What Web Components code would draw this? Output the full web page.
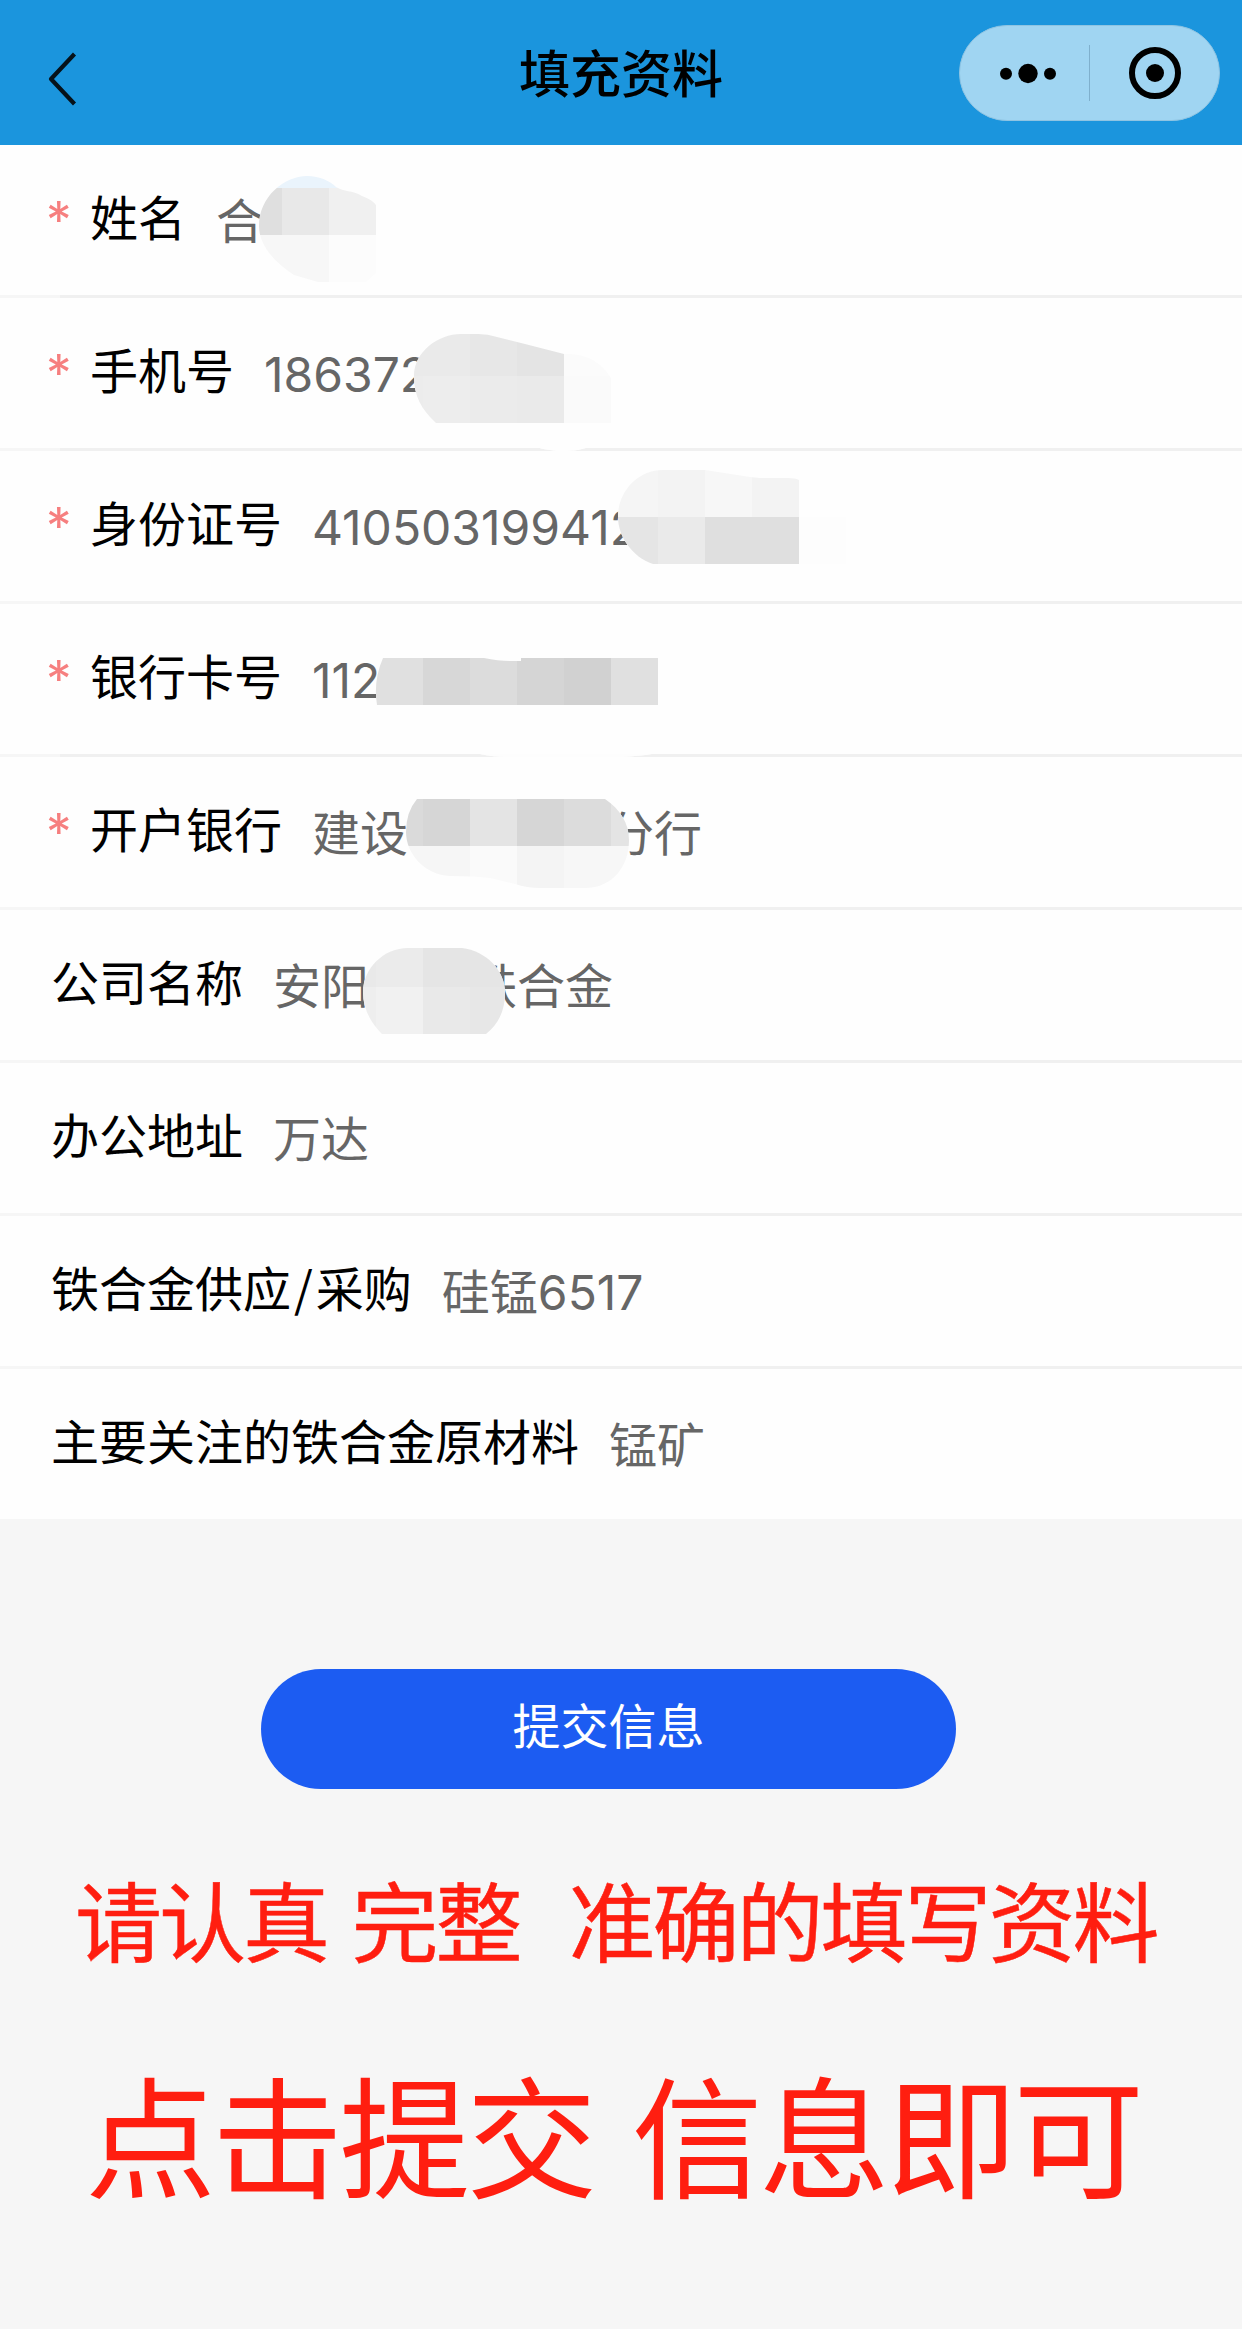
<!DOCTYPE html>
<html lang="zh-CN">
<head>
<meta charset="utf-8">
<title>填充资料</title>
<style>
  body {
    margin: 0;
    background: #f6f6f6;
    font-family: Inter, "Noto Sans CJK SC", sans-serif;
    font-size: 48px;
    color: #000;
  }
</style>
</head>
<body>
<profile-page>
  <nav-bar slot="header">填充资料</nav-bar>

  <form-row required label="姓名">合
    <mosaic-patch slot="patch" outline="M259 81 C259 52 284 31 307 31 C320 31 330 36 336 42 C344 47 352 45 362 51 C370 54 374 57 376 60 V128 L366 137 H318 L294 130 C274 117 259 100 259 81Z" cells="259,31,117,12,#eaf4fc 259,43,23,47,#dfdfdf 282,43,47,47,#e8e8e8 329,43,47,47,#f0f0f0 259,90,70,47,#f7f7f7 329,90,47,47,#fcfcfc"></mosaic-patch>
  </form-row>
  <form-row required label="手机号">186372
    <mosaic-patch slot="patch" outline="M414 78 C414 54 438 36 461 36 H478 Q488 36 497 39 L525 46 L564 56 H570 C588 57 602 65 611 80 V130 C609 142 590 153 564 153 C540 153 530 146 510 141 L436 125 C421 111 414 98 414 78Z" cells="414,36,56,42,#eaeaea 470,36,47,42,#e7e7e7 517,36,47,42,#e4e4e4 564,36,47,42,#fbfbfb 414,78,9,47,#ececec 423,78,47,47,#ededed 470,78,47,47,#ebebeb 517,78,47,47,#eaeaea 564,78,47,47,#fafafa 436,125,175,28,#fefefe"></mosaic-patch>
  </form-row>
  <form-row required label="身份证号">410503199412
    <mosaic-patch slot="patch" outline="M618 66 C618 40 638 19 663 19 H705 L750 26 L760 27 H788 Q796 27 799 29 V66 H846 V115 C835 126 800 129 780 126 L705 115 L653 113 C632 106 618 85 618 66Z" cells="618,19,40,47,#f5f5f5 658,19,47,47,#f3f3f3 705,19,47,47,#f7f7f7 752,19,47,47,#f3f3f3 618,66,40,47,#e5e5e5 658,66,47,47,#eaeaea 705,66,94,47,#dfdfdf 799,66,47,47,#fdfdfd"></mosaic-patch>
  </form-row>
  <form-row required label="银行卡号">112
    <mosaic-patch slot="patch" outline="M383 54 H484 Q498 57 510 57 H521 V54 H658 V101 H377 Q373 77 383 54Z M480 150 Q492 153 510 153 H620 Q640 152 652 150Z" cells="373,54,50,47,#e0e0e0 423,54,47,47,#d7d7d7 470,54,47,47,#dcdcdc 517,54,47,47,#d5d5d5 564,54,47,47,#d1d1d1 611,54,47,47,#e0e0e0 480,150,172,3,#fdfdfd"></mosaic-patch>
  </form-row>
  <form-row required label="开户银行">建设<text-gap style="width:198px"></text-gap>分行
    <mosaic-patch slot="patch" outline="M417 42 H605 C620 52 629 66 629 83 C629 110 612 131 585 131 H540 Q527 131 515 127 L490 121 Q475 119 450 119 C425 118 406 97 406 75 Q406 55 417 42Z" cells="406,42,17,47,#dadada 423,42,47,47,#d6d6d6 470,42,47,47,#e4e4e4 517,42,47,47,#d6d6d6 564,42,47,47,#dcdcdc 611,42,18,47,#e4e4e4 406,89,64,42,#f6f6f6 470,89,47,42,#fafafa 517,89,47,42,#f4f4f4 564,89,65,42,#f7f7f7"></mosaic-patch>
  </form-row>
  <form-row label="公司名称">安阳<text-gap style="width:100px"></text-gap>铁合金
    <mosaic-patch slot="patch" outline="M363 82 C363 58 384 38 408 38 H462 C486 41 505 60 505 83 Q505 109 486 124 H382 Q363 105 363 82Z" cells="363,38,13,39,#e9e9e9 376,38,47,39,#ebebeb 423,38,82,39,#e5e5e5 363,77,13,47,#eeeeee 376,77,47,47,#f1f1f1 423,77,47,47,#e9e9e9 470,77,35,47,#e7e7e7"></mosaic-patch>
  </form-row>
  <form-row label="办公地址">万达</form-row>
  <form-row label="铁合金供应/采购">硅锰6517</form-row>
  <form-row label="主要关注的铁合金原材料">锰矿</form-row>

  <submit-button slot="action">提交信息</submit-button>
  <red-note slot="notes" style="--size:87px; --tracking:-3px; --space:8px; --left:75px; --stroke:.5px">请认真 完整  准确的填写资料</red-note>
  <red-note slot="notes" style="--size:131px; --tracking:-3.9px; --space:13px; --left:85px; --stroke:0">点击提交 信息即可</red-note>
</profile-page>

<script>
class ProfilePage extends HTMLElement {
  constructor() {
    super();
    this.attachShadow({ mode: "open" }).innerHTML = `
      <style>
        :host { display: flex; flex-direction: column; height: 2329px; overflow: hidden; }
        .rows { display: flex; flex: none; flex-direction: column; background: #fefefe; height: 1374px; overflow: hidden; }
        .action { padding: 150px 0 0 261px; }
        .notes { display: flex; flex-direction: column; padding-top: 69px; gap: 60px; }
      </style>
      <slot name="header"></slot>
      <div class="rows"><slot></slot></div>
      <div class="action"><slot name="action"></slot></div>
      <div class="notes"><slot name="notes"></slot></div>
    `;
  }
}

class NavBar extends HTMLElement {
  constructor() {
    super();
    this.attachShadow({ mode: "open" }).innerHTML = `
      <style>
        :host {
          display: grid;
          flex: none;
          grid-template-columns: 1fr auto 1fr;
          align-items: center;
          box-sizing: border-box;
          height: 145px;
          padding: 0 22px;
          background: #1b95dd;
        }
        svg { display: block; }
        .back { margin: 13px 0 0 25px; }
        .title { font-size: 51px; font-weight: 500; line-height: 60px; padding-top: 4px; }
        .capsule { justify-self: end; }
      </style>
      <svg class="back" width="30" height="54" viewBox="0 0 30 54" fill="none" stroke="#06121a" stroke-width="4.2" stroke-linejoin="round">
        <path d="M27.5 2 L4 27 L27.5 52"/>
      </svg>
      <div class="title"><slot></slot></div>
      <svg class="capsule" width="261" height="96" viewBox="0 0 261 96">
        <rect x=".5" y=".5" width="260" height="95" rx="47.5" fill="#a0d5f2" stroke="#8fc4e2"/>
        <circle cx="47" cy="48.7" r="6"/>
        <circle cx="69" cy="48.5" r="9.7"/>
        <circle cx="91" cy="48.7" r="6"/>
        <path d="M130.5 20 V76" stroke="#7fb0cd"/>
        <circle cx="196" cy="48" r="23" fill="none" stroke="#000" stroke-width="6"/>
        <circle cx="196" cy="48" r="9"/>
      </svg>
    `;
  }
}

class FormRow extends HTMLElement {
  constructor() {
    super();
    this.attachShadow({ mode: "open" }).innerHTML = `
      <style>
        :host {
          display: flex;
          position: relative;
          flex: none;
          box-sizing: border-box;
          height: 153px;
          padding: 0 0 3px 51px;
          background: linear-gradient(to right, #f6f6f6 60px, #f0f0f0 60px) bottom / 100% 3px no-repeat;
        }
        :host([required]) { padding-left: 46px; }
        .star { display: none; width: 44px; color: #f67f7f; padding-top: 45px; font-size: 51px; font-weight: 400; line-height: 60px; }
        :host([required]) .star { display: block; }
        .label { font-family: "Noto Sans CJK SC", sans-serif; line-height: 70px; padding-top: 35px; white-space: nowrap; }
        .label i { font-style: normal; padding: 0 3px; }
        .value { color: #666; line-height: 70px; padding-top: 42px; margin-left: 30px; white-space: nowrap; }
      </style>
      <span class="star">*</span>
      <span class="label"></span>
      <span class="value"><slot></slot></span>
      <slot name="patch"></slot>
    `;
  }
  connectedCallback() {
    this.shadowRoot.querySelector(".label").innerHTML = this.getAttribute("label").replace("/", "<i>/</i>");
  }
}

// blank run between two visible parts of a value
class TextGap extends HTMLElement {
  constructor() {
    super();
    this.attachShadow({ mode: "open" }).innerHTML = `<style>:host { display: inline-block; }</style>`;
  }
}

// mosaic over private data; cells are "x,y,w,h,color" in row coordinates
class MosaicPatch extends HTMLElement {
  connectedCallback() {
    const rects = this.getAttribute("cells").split(" ").map((cell) => {
      const [x, y, w, h, fill] = cell.split(",");
      return `<rect x="${x}" y="${y}" width="${w}" height="${h}" fill="${fill}"/>`;
    }).join("");
    const outline = this.getAttribute("outline");
    this.attachShadow({ mode: "open" }).innerHTML = `
      <style>
        :host { position: absolute; left: 0; top: 0; }
        svg { display: block; }
      </style>
      <svg width="900" height="153">
        <clipPath id="shape"><path d="${outline}"/></clipPath>
        <g clip-path="url(#shape)" shape-rendering="crispEdges"><rect width="900" height="153" fill="#fefefe"/>${rects}</g>
      </svg>
    `;
  }
}

class SubmitButton extends HTMLElement {
  constructor() {
    super();
    this.attachShadow({ mode: "open" }).innerHTML = `
      <style>
        :host { display: block; width: 695px; }
        button {
          display: block;
          width: 100%;
          height: 120px;
          padding: 0 0 4px;
          border: none;
          border-radius: 60px;
          background: #1c5cf2;
          color: #fff;
          font: inherit;
          line-height: 70px;
        }
      </style>
      <button><slot></slot></button>
    `;
  }
}

class RedNote extends HTMLElement {
  constructor() {
    super();
    this.attachShadow({ mode: "open" }).innerHTML = `
      <style>
        :host {
          display: block;
          padding-left: var(--left);
          color: #ff1e10;
          font-family: "Noto Sans CJK SC", sans-serif;
          font-size: var(--size);
          line-height: 1.4;
          letter-spacing: var(--tracking);
          word-spacing: var(--space);
          -webkit-text-stroke: var(--stroke) #ff1e10;
        }
        slot { white-space: pre; }
      </style>
      <slot></slot>
    `;
  }
}

customElements.define("profile-page", ProfilePage);
customElements.define("nav-bar", NavBar);
customElements.define("form-row", FormRow);
customElements.define("text-gap", TextGap);
customElements.define("mosaic-patch", MosaicPatch);
customElements.define("submit-button", SubmitButton);
customElements.define("red-note", RedNote);
</script>
</body>
</html>
